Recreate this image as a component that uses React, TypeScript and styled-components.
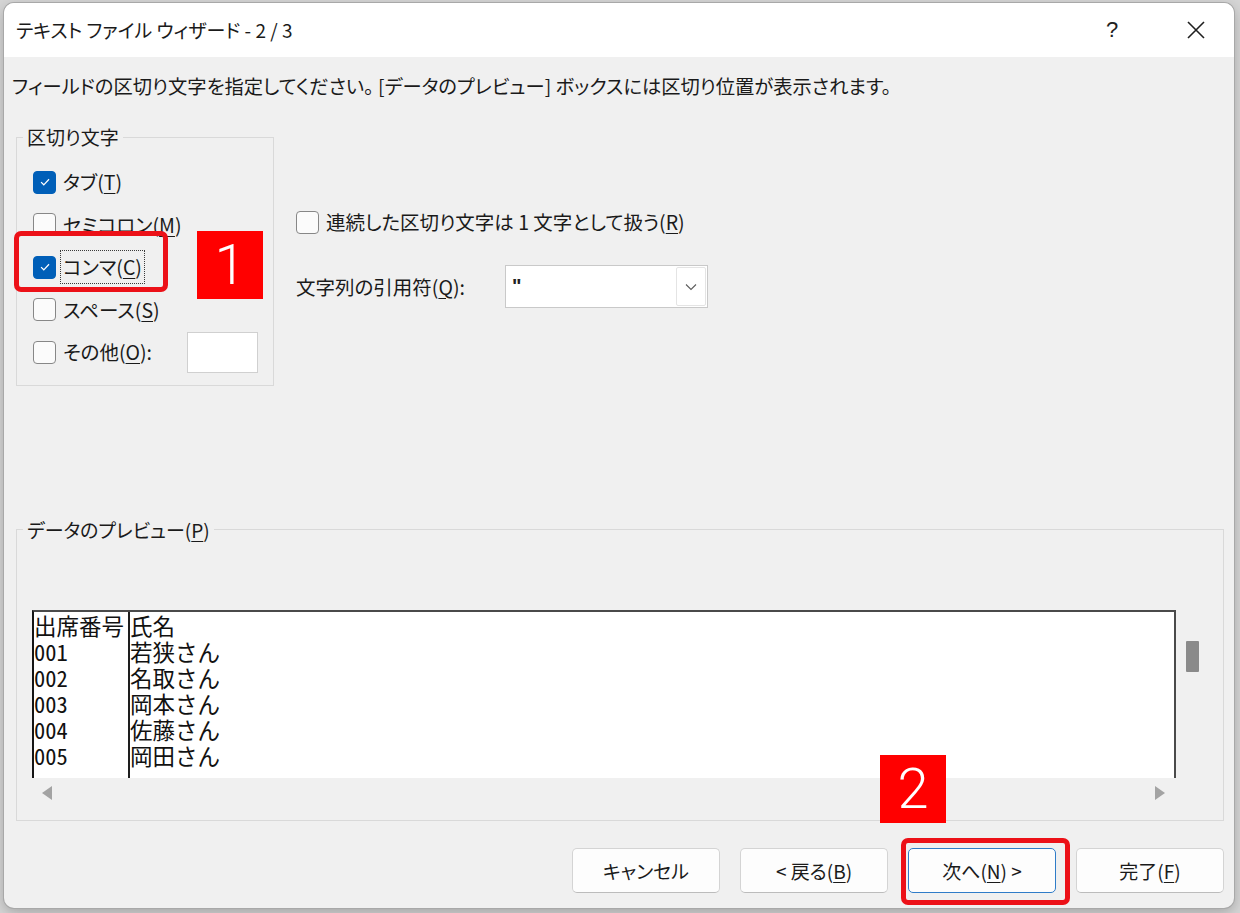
import React from 'react';
import styled, { createGlobalStyle } from 'styled-components';

const UI_FONT = `"Noto Sans CJK JP", "Noto Sans", sans-serif`;

const GlobalStyle = createGlobalStyle`
  html, body {
    margin: 0;
    padding: 0;
    background: #d6d6d6;
  }
  body {
    font-family: ${UI_FONT};
    color: #1a1a1a;
  }
  * {
    box-sizing: border-box;
  }
`;

const Page = styled.div`
  width: 1240px;
  height: 913px;
  padding: 3px 6px 5px 4px;
`;

const Dialog = styled.div`
  position: relative;
  width: 1230px;
  height: 905px;
  display: flex;
  flex-direction: column;
  background: #f0f0f0;
  border-radius: 10px;
  overflow: hidden;
  box-shadow: 0 0 0 1px #a8a8a8, 0 4px 14px rgba(0, 0, 0, 0.25);
  font-feature-settings: "palt";
`;

const TitleBar = styled.div`
  height: 54px;
  flex: none;
  display: flex;
  align-items: center;
  padding-left: 12px;
  background: #fff;
`;

const Title = styled.div`
  flex: 1;
  font-size: 19px;
  line-height: 28px;
`;

const CaptionButtons = styled.div`
  display: flex;
  gap: 8px;
  height: 100%;
`;

const CaptionButton = styled.div`
  width: 76px;
  height: 100%;
  display: flex;
  align-items: center;
  justify-content: center;
  font-family: "Liberation Sans", sans-serif;
  font-size: 22px;
  color: #222;
`;

const Body = styled.div`
  flex: 1;
  display: flex;
  flex-direction: column;
  padding: 15px 10px 15px 12px;
`;

const Instruction = styled.div`
  margin-left: -4px;
  font-size: 19.3px;
  line-height: 28px;
  white-space: nowrap;
`;

const TopArea = styled.div`
  display: flex;
  align-items: flex-start;
  margin-top: 24px;
`;

const GroupBox = styled.fieldset<{ $width?: number; $pad: string; $gap?: number }>`
  margin: ${p => (p.$gap ? `${p.$gap}px 0 0` : '0')};
  min-width: 0;
  width: ${p => (p.$width ? `${p.$width}px` : 'auto')};
  padding: ${p => p.$pad};
  border: 1px solid #d9d9d9;
`;

/* legend sits at the fieldset's padding edge, so pull it back to the border */
const Legend = styled.legend<{ $shift: number }>`
  margin-left: ${p => p.$shift}px;
  padding: 0 4px;
  font-size: 19px;
  line-height: 26px;
`;

const CheckRow = styled.div<{ $height: number }>`
  display: flex;
  align-items: center;
  gap: 6px;
  height: ${p => p.$height}px;
`;

const Box = styled.span<{ $checked?: boolean }>`
  flex: none;
  width: 23px;
  height: 23px;
  display: flex;
  align-items: center;
  justify-content: center;
  border-radius: 4px;
  border: 1px solid ${p => (p.$checked ? '#005fb8' : '#878787')};
  background: ${p => (p.$checked ? '#005fb8' : '#fbfbfb')};
`;

const Label = styled.span<{ $focused?: boolean }>`
  font-size: 19.5px;
  line-height: 28px;
  padding: 1px 1px;
  white-space: nowrap;
  outline: ${p => (p.$focused ? '1px dotted #3a3a3a' : 'none')};
  outline-offset: 1px;
`;

const Key = styled.u`
  text-underline-offset: 3px;
  text-decoration-thickness: 1px;
`;

const OtherInput = styled.div`
  margin-left: auto;
  width: 71px;
  height: 41px;
  background: #fff;
  border: 1px solid #d0d0d0;
`;

const RightColumn = styled.div`
  display: flex;
  flex-direction: column;
  gap: 22px;
  margin: 77px 0 0 22px;
`;

const QuoteRow = styled.div`
  display: flex;
  align-items: center;
  height: 43px;
`;

const QuoteLabel = styled.span`
  width: 209px;
  font-size: 19.5px;
  line-height: 28px;
  white-space: nowrap;
`;

const Combo = styled.div`
  width: 203px;
  height: 43px;
  display: flex;
  align-items: stretch;
  justify-content: space-between;
  padding: 1px 1px 1px 6px;
  background: #fff;
  border: 1px solid #c9c9c9;
`;

const ComboValue = styled.span`
  align-self: center;
  font-family: "Liberation Sans", sans-serif;
  font-size: 20px;
  font-weight: bold;
  color: #222;
`;

const DropButton = styled.span`
  width: 30px;
  display: flex;
  align-items: center;
  justify-content: center;
  border: 1px solid #e4e4e4;
  border-radius: 2px;
  background: #fff;
`;

const PreviewGrid = styled.div`
  display: grid;
  grid-template-columns: 1fr 32px;
  grid-template-rows: 168px 34px;
`;

const ListBox = styled.div`
  display: flex;
  background: #fff;
  border: 2px solid #4a4a4a;
  border-left-color: #151515;
  border-bottom: 0;
`;

/* one text block per column, one line per record */
const Column = styled.div<{ $width?: number; $divider?: boolean }>`
  flex: ${p => (p.$width ? `0 0 ${p.$width}px` : '1')};
  border-right: ${p => (p.$divider ? '2px solid #1e1e1e' : '0')};
  font-size: 22.5px;
  line-height: 26px;
  white-space: pre;
  color: #111;
  font-feature-settings: ${p => (p.$divider ? '"hwid"' : 'normal')};
`;

const VScroll = styled.div`
  padding: 31px 0 0 10px;
`;

const Thumb = styled.div`
  width: 13px;
  height: 31px;
  background: #8a8a8a;
  border-radius: 1px;
`;

const HScroll = styled.div`
  display: flex;
  align-items: center;
  justify-content: space-between;
  padding: 0 11px 4px 10px;
`;

const ButtonRow = styled.div`
  display: flex;
  justify-content: flex-end;
  gap: 20px;
  margin-top: 27px;
`;

const Button = styled.div<{ $focused?: boolean }>`
  width: 148px;
  height: 45px;
  display: flex;
  align-items: center;
  justify-content: center;
  font-size: 19px;
  background: #fdfdfd;
  border-radius: 5px;
  border: 1px solid ${p => (p.$focused ? '#2f7cc8' : '#d4d4d4')};
  border-bottom-color: ${p => (p.$focused ? '#2f7cc8' : '#bcbcbc')};
  white-space: nowrap;
`;

const Ring = styled.div<{ $x: number; $y: number; $w: number; $h: number }>`
  position: absolute;
  left: ${p => p.$x}px;
  top: ${p => p.$y}px;
  width: ${p => p.$w}px;
  height: ${p => p.$h}px;
  border: 5px solid #ec1118;
  border-radius: 7px;
  pointer-events: none;
`;

const Badge = styled.div<{ $x: number; $y: number }>`
  position: absolute;
  left: ${p => p.$x}px;
  top: ${p => p.$y}px;
  width: 66px;
  height: 68px;
  display: flex;
  align-items: center;
  justify-content: center;
  background: #ff0000;
  color: #fff;
  font-family: Roboto, "Liberation Sans", sans-serif;
  font-weight: 300;
  font-size: 56px;
  line-height: 1;
`;

const Check = () => (
  <svg width="14" height="14" viewBox="0 0 16 16">
    <path d="M3.5 8.2 L6.6 11.2 L12.6 4.9" fill="none" stroke="#fff" strokeWidth="1.4" />
  </svg>
);

const Chevron = () => (
  <svg width="12" height="8" viewBox="0 0 12 8">
    <path d="M1 1.5 L6 6.5 L11 1.5" fill="none" stroke="#5c5c5c" strokeWidth="1.1" />
  </svg>
);

const CloseIcon = () => (
  <svg width="18" height="18" viewBox="0 0 18 18">
    <path d="M1 1 L17 17 M17 1 L1 17" stroke="#1f1f1f" strokeWidth="1.6" />
  </svg>
);

const Arrow = ({ dir }: { dir: 'left' | 'right' }) => (
  <svg width="10" height="14" viewBox="0 0 10 14">
    <polygon points={dir === 'left' ? '10,0 10,14 0,7' : '0,0 0,14 10,7'} fill="#a3a3a3" />
  </svg>
);

type Option = { text: string; key: string; tail?: string; checked?: boolean; focused?: boolean };

const delimiters: Option[] = [
  { text: 'タブ', key: 'T', checked: true },
  { text: 'セミコロン', key: 'M' },
  { text: 'コンマ', key: 'C', checked: true, focused: true },
  { text: 'スペース', key: 'S' },
  { text: 'その他', key: 'O', tail: ':' },
];

const preview = [
  ['出席番号', '氏名'],
  ['001', '若狭さん'],
  ['002', '名取さん'],
  ['003', '岡本さん'],
  ['004', '佐藤さん'],
  ['005', '岡田さん'],
];

const Labelled = ({ o }: { o: Option }) => (
  <Label $focused={o.focused}>
    {o.text}(<Key>{o.key}</Key>){o.tail}
  </Label>
);

export default function App() {
  return (
    <Page>
      <GlobalStyle />
      <Dialog>
        <TitleBar>
          <Title>テキスト ファイル ウィザード - 2 / 3</Title>
          <CaptionButtons>
            <CaptionButton>?</CaptionButton>
            <CaptionButton>
              <CloseIcon />
            </CaptionButton>
          </CaptionButtons>
        </TitleBar>

        <Body>
          <Instruction>
            フィールドの区切り文字を指定してください。 [データのプレビュー] ボックスには区切り位置が表示されます。
          </Instruction>

          <TopArea>
            <GroupBox $width={258} $pad="11px 15px 11px 16px">
              <Legend $shift={-10}>区切り文字</Legend>
              {delimiters.map(o => (
                <CheckRow key={o.key} $height={42.5}>
                  <Box $checked={o.checked}>{o.checked && <Check />}</Box>
                  <Labelled o={o} />
                  {o.key === 'O' && <OtherInput />}
                </CheckRow>
              ))}
            </GroupBox>

            <RightColumn>
              <CheckRow $height={42}>
                <Box />
                <Label>
                  連続した区切り文字は 1 文字として扱う(<Key>R</Key>)
                </Label>
              </CheckRow>
              <QuoteRow>
                <QuoteLabel>
                  文字列の引用符(<Key>Q</Key>):
                </QuoteLabel>
                <Combo>
                  <ComboValue>"</ComboValue>
                  <DropButton>
                    <Chevron />
                  </DropButton>
                </Combo>
              </QuoteRow>
            </RightColumn>
          </TopArea>

          <GroupBox $pad="67px 15px 8px 15px" $gap={131}>
            <Legend $shift={-9}>
              データのプレビュー(<Key>P</Key>)
            </Legend>
            <PreviewGrid>
              <ListBox>
                <Column $width={96} $divider>
                  {preview.map(r => r[0]).join('\n')}
                </Column>
                <Column>{preview.map(r => r[1]).join('\n')}</Column>
              </ListBox>
              <VScroll>
                <Thumb />
              </VScroll>
              <HScroll>
                <Arrow dir="left" />
                <Arrow dir="right" />
              </HScroll>
            </PreviewGrid>
          </GroupBox>

          <ButtonRow>
            <Button>キャンセル</Button>
            <Button>
              &lt; 戻る(<Key>B</Key>)
            </Button>
            <Button $focused>
              次へ(<Key>N</Key>) &gt;
            </Button>
            <Button>
              完了(<Key>F</Key>)
            </Button>
          </ButtonRow>
        </Body>

        <Ring $x={10} $y={228} $w={154} $h={61} />
        <Badge $x={193} $y={228}>1</Badge>
        <Badge $x={876} $y={752}>2</Badge>
        <Ring $x={897} $y={835} $w={169} $h={67} />
      </Dialog>
    </Page>
  );
}
